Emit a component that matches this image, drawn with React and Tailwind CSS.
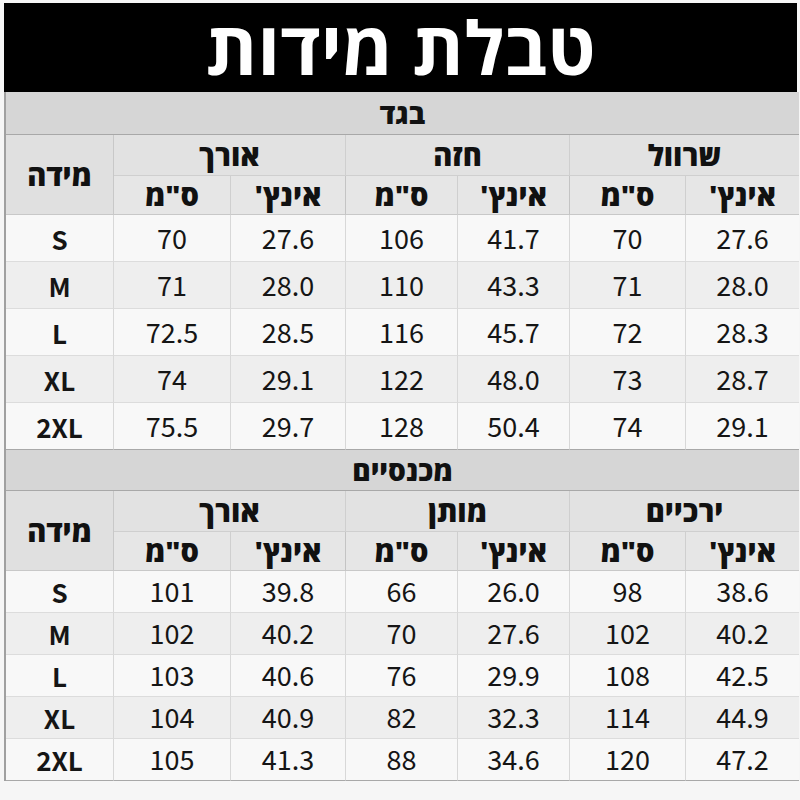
import React from "react";

const HEB = "font-['Open_Sans','DejaVu_Sans',sans-serif]";
const NUM = "font-['Noto_Sans_CJK_SC','Noto_Sans',sans-serif]";

const t1 = [
  ["S", "70", "27.6", "106", "41.7", "70", "27.6"],
  ["M", "71", "28.0", "110", "43.3", "71", "28.0"],
  ["L", "72.5", "28.5", "116", "45.7", "72", "28.3"],
  ["XL", "74", "29.1", "122", "48.0", "73", "28.7"],
  ["2XL", "75.5", "29.7", "128", "50.4", "74", "29.1"],
];
const t2 = [
  ["S", "101", "39.8", "66", "26.0", "98", "38.6"],
  ["M", "102", "40.2", "70", "27.6", "102", "40.2"],
  ["L", "103", "40.6", "76", "29.9", "108", "42.5"],
  ["XL", "104", "40.9", "82", "32.3", "114", "44.9"],
  ["2XL", "105", "41.3", "88", "34.6", "120", "47.2"],
];

function Section({ title, groups, rows, rowH, secH }) {
  return (
    <>
      <div
        className={`col-span-7 flex items-center justify-center bg-[#d6d6d6] border-b border-[#a8a8a8] text-[28px] font-extrabold text-[#111] ${HEB} ${secH}`}
        dir="rtl"
      >
        {title}
      </div>
      <div
        className={`row-span-2 flex items-center justify-center bg-[#e0e0e0] border-r border-b border-[#c8c8c8] text-[29px] font-extrabold text-[#111] ${HEB}`}
        dir="rtl"
      >
        מידה
      </div>
      {groups.map((g, i) => (
        <div
          key={g}
          className={`col-span-2 flex items-center justify-center h-[41px] bg-[#e2e2e2] border-b border-[#cfcfcf] text-[29px] font-extrabold text-[#111] ${HEB} ${i < 2 ? "border-r" : ""}`}
          dir="rtl"
        >
          {g}
        </div>
      ))}
      {[0, 1, 2, 3, 4, 5].map((i) => (
        <div
          key={i}
          className={`flex items-center justify-center h-[39px] bg-[#e6e6e6] border-b border-[#c8c8c8] text-[29px] font-extrabold text-[#111] ${HEB} ${i < 5 ? "border-r" : ""} ${i % 2 === 0 ? "border-r-[#cfcfcf]" : "border-r-[#c4c4c4]"}`}
          dir="rtl"
        >
          {i % 2 === 0 ? 'ס"מ' : "אינץ'"}
        </div>
      ))}
      {rows.map((r, ri) => (
        <React.Fragment key={ri}>
          {r.map((c, ci) => (
            <div
              key={ci}
              className={`flex items-center justify-center text-[#151515] ${NUM} ${rowH} ${ri % 2 === 0 ? "bg-[#f8f8f8]" : "bg-[#eeeeee]"} ${ri < 4 ? "border-b border-[#dcdcdc]" : "border-b border-[#a8a8a8]"} ${ci < 6 ? "border-r border-r-[#d8d8d8]" : ""} ${ci === 0 ? "font-bold text-[26px]" : "text-[27px]"}`}
            >
              {c}
            </div>
          ))}
        </React.Fragment>
      ))}
    </>
  );
}

export default function App() {
  return (
    <div className="w-[800px] h-[800px] bg-[#f6f6f6] pt-[3px] pl-[4px] overflow-hidden">
      <div className="w-[793px]">
        <div
          className={`h-[89px] bg-black flex items-center justify-center text-white text-[74px] font-bold leading-[1.2] ${HEB}`}
          dir="rtl"
        >
          טבלת מידות
        </div>
        <div className="grid grid-cols-[108px_117px_115px_112px_112px_116px_113px] border-l-2 border-r-2 border-[#a0a0a0]">
          <Section
            title="בגד"
            groups={["אורך", "חזה", "שרוול"]}
            rows={t1}
            rowH="h-[47px]"
            secH="h-[43px]"
          />
          <Section
            title="מכנסיים"
            groups={["אורך", "מותן", "ירכיים"]}
            rows={t2}
            rowH="h-[42px]"
            secH="h-[41px]"
          />
        </div>
      </div>
    </div>
  );
}
